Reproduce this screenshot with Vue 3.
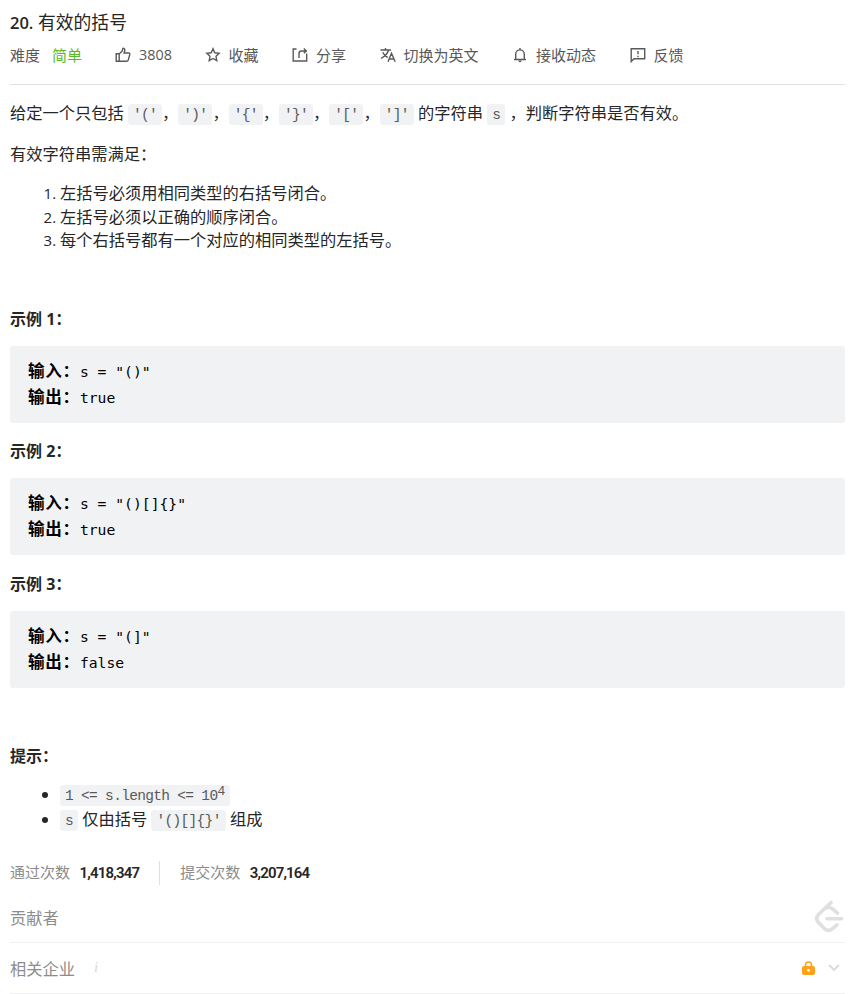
<script setup>
import {ref} from "vue";

const brackets = ref(["'('", "')'", "'{'", "'}'", "'['", "']'"])

const rules = ref([
  '左括号必须用相同类型的右括号闭合。',
  '左括号必须以正确的顺序闭合。',
  '每个右括号都有一个对应的相同类型的左括号。',
])

const examples = ref([
  {input: 's = "()"', output: 'true'},
  {input: 's = "()[]{}"', output: 'true'},
  {input: 's = "(]"', output: 'false'},
])
</script>

<template>
  <div class="question">
    <h4 class="title"><span class="title-no">20.</span> 有效的括号</h4>
    <div class="toolbar">
      <span class="label">难度</span>
      <span class="level">简单</span>
      <button class="tool like">
        <svg viewBox="0 0 16 16"><path d="M1.2 6.800h3v7.500h-3zM4.200 7l3-3.100.5-2.100c.2-.8 1.900-.6 2.100.7.1 1-.3 2.400-.7 3.500h4.500c1 0 1.400.7 1.200 1.500l-1.500 5.400c-.2.9-.8 1.400-1.700 1.400H4.200" /></svg>
        <span>3808</span>
      </button>
      <button class="tool star">
        <svg viewBox="0 0 16 16"><path d="M8 1.800l1.800 4 4.400.5-3.200 3 .8 4.400L8 11.500l-3.800 2.200.8-4.400-3.200-3 4.400-.5z" /></svg>
        <span>收藏</span>
      </button>
      <button class="tool share">
        <svg viewBox="0 0 16 16"><path d="M4.500 2H1.200v12h13.500V6.500M7 11V6.500q0-2.500 2.500-2.500h4.500M11.800 1.500L14.400 4l-2.600 2.300" /></svg>
        <span>分享</span>
      </button>
      <button class="tool lang">
        <svg viewBox="0 0 16 16"><path d="M.5 3h10.500M5.500 1v2M8.500 3C7.700 6.500 4.500 9.500 1 11.500M2.700 5.200c1 2.400 2.700 4.200 5 5.300M8 14.800l3.500-8.600 3.700 8.600M9.200 12h5" /></svg>
        <span>切换为英文</span>
      </button>
      <button class="tool bell">
        <svg viewBox="0 0 16 16"><path d="M2 12.500h12M3.700 12.300V7.200a4.300 4.300 0 0 1 8.600 0v5.100M8 1v2" /><path class="fill" d="M6.300 13.500h3.400a1.700 1.700 0 0 1-3.400 0z" /></svg>
        <span>接收动态</span>
      </button>
      <button class="tool feedback">
        <svg viewBox="0 0 16 16"><path d="M1.200 14.500V1.700h13.500v10H4zM8 4v3.300M8 8.700v1.500" /></svg>
        <span>反馈</span>
      </button>
    </div>

    <div class="content">
      <p>给定一个只包括 <template v-for="(item, i) in brackets" :key="item"><code>{{ item }}</code><template v-if="i < brackets.length - 1">，</template></template> 的字符串 <code>s</code> ，判断字符串是否有效。</p>
      <p class="need">有效字符串需满足：</p>
      <ol>
        <li v-for="rule in rules" :key="rule">{{ rule }}</li>
      </ol>

      <section v-for="(item, i) in examples" :key="i">
        <p class="strong">示例 {{ i + 1 }}：</p>
        <pre><strong>输入：</strong>{{ item.input }}
<strong>输出：</strong>{{ item.output }}</pre>
      </section>

      <p class="strong tip">提示：</p>
      <ul>
        <li><code>1 &lt;= s.length &lt;= 10<sup>4</sup></code></li>
        <li><code>s</code> 仅由括号 <code>'()[]{}'</code> 组成</li>
      </ul>
    </div>

    <div class="stats">
      <span>通过次数</span><b>1,418,347</b>
      <i class="divider"></i>
      <span>提交次数</span><b>3,207,164</b>
    </div>
    <div class="row contributor">
      <span>贡献者</span>
      <svg class="logo" viewBox="0 0 30 34"><path d="M17 2.500L4.500 14.500Q.8 18.500 4.500 22.500l6 6.200q4 3.500 8 0l4.500-3.900M11.500 8.500q3.500-2.500 6.500 0l5.500 4.700M13 18.800h14.500" /></svg>
    </div>
    <div class="row company">
      <span>相关企业</span>
      <i class="info">i</i>
      <svg class="lock" viewBox="0 0 13 14"><path class="shackle" d="M3.500 6V4a3 3 0 0 1 6 0v2" /><rect y="5" width="13" height="9" rx="2" /><circle cx="6.500" cy="9.300" r="1.400" /></svg>
      <svg class="arrow" viewBox="0 0 12 8"><path d="M1 1l5 5 5-5" /></svg>
    </div>
  </div>
</template>

<style>
body {
  margin: 0;
  background: #fff;
}
</style>

<style scoped>
.question {
  box-sizing: border-box;
  height: 994px;
  padding: 8px 16px 0 10px;
  overflow: hidden;
  color: #262626;
  font-family: "Open Sans", "Noto Sans CJK SC", sans-serif;
  font-size: 16px;
}

.title {
  height: 28px;
  margin: 0;
  line-height: 28px;
  font-size: 17.8px;
  font-weight: 400;
}

.title-no {
  font-weight: 600;
  font-size: 16.5px;
}

.toolbar {
  display: flex;
  align-items: center;
  height: 48px;
  border-bottom: 1px solid #e0e0e0;
  color: #595959;
  font-size: 15px;
  line-height: 22px;
  white-space: nowrap;
}

.toolbar > * {
  margin-bottom: 10px;
}

.label {
  width: 42px;
}

.level {
  width: 63px;
  color: #5ab726;
}

.tool {
  display: flex;
  align-items: center;
  flex: none;
  gap: 8px;
  margin-top: 0;
  margin-left: 0;
  margin-right: 0;
  padding: 0;
  border: none;
  background: none;
  color: inherit;
  font: inherit;
}

.tool svg {
  width: 16px;
  height: 16px;
  fill: none;
  stroke: #595959;
  stroke-width: 1.4;
}

.tool .fill {
  fill: #595959;
  stroke: none;
}

.like {
  width: 89.5px;
}

.like span {
  font-size: 14.4px;
}

.star {
  width: 87.5px;
}

.share {
  width: 87.5px;
}

.lang {
  width: 132.5px;
}

.bell {
  width: 117.5px;
}

.content {
  font-size: 16.25px;
  line-height: 24px;
}

.content p {
  height: 24px;
  margin: 16px 0 17px;
  white-space: nowrap;
}

.content .need {
  margin-bottom: 16px;
}

code {
  display: inline-block;
  height: 21px;
  margin: -2px 0;
  padding: 0 5px;
  border-radius: 3px;
  background: #f1f2f4;
  color: #595959;
  font-family: "Liberation Mono", monospace;
  font-size: 14.5px;
  letter-spacing: -0.68px;
  line-height: 23px;
  vertical-align: 0.5px;
}

ol, ul {
  margin: 0;
  padding-left: 50px;
}

ol {
  margin-bottom: 54px;
  line-height: 23.5px;
}

ol li::marker {
  font-size: 15px;
}

.content .strong {
  margin: 0 0 15px;
  font-weight: 700;
  font-size: 16px;
}

pre {
  box-sizing: border-box;
  height: 77px;
  margin: 0 0 16.8px;
  padding: 13px 18px 11px;
  border-radius: 3px;
  background: #f1f2f4;
  color: #000;
  font-family: "DejaVu Sans Mono", "Noto Sans CJK SC", monospace;
  font-size: 14.7px;
  line-height: 26px;
}

pre strong {
  font-family: "Noto Sans CJK SC", sans-serif;
  font-size: 16.6px;
  letter-spacing: 0.7px;
  line-height: 20px;
}

.content .tip {
  margin-top: 56px;
  margin-bottom: 14px;
}

ul {
  line-height: 25px;
}

ul li {
  height: 25px;
}

sup {
  font-size: 13px;
  line-height: 0;
  vertical-align: 5px;
}

.stats {
  display: flex;
  align-items: center;
  height: 24px;
  margin-top: 28.5px;
  color: #8c8c8c;
  font-size: 15px;
}

.stats span {
  margin-top: -2px;
}

.stats b {
  margin-left: 9.5px;
  color: #262626;
  font-family: Roboto, sans-serif;
  font-size: 15px;
  font-weight: 600;
  letter-spacing: -0.82px;
}

.divider {
  width: 1px;
  height: 24px;
  margin: 0 20px;
  background: #e0e0e0;
}

.row {
  display: flex;
  align-items: center;
  box-sizing: border-box;
  height: 51px;
  border-bottom: 1px solid #f0f0f0;
  color: #8c8c8c;
  font-size: 16.25px;
}

.contributor {
  height: 58px;
  padding-top: 8px;
}

.logo {
  width: 30px;
  height: 34px;
  margin-left: auto;
  margin-right: 1px;
  fill: none;
  stroke: #e0e0e0;
  stroke-width: 3.6;
  stroke-linecap: round;
}

.info {
  margin-left: 19px;
  color: #d9d9d9;
  font-family: "Liberation Serif", serif;
  font-size: 15px;
}

.lock {
  width: 13px;
  height: 14px;
  margin-left: auto;
  fill: #ffa119;
}

.lock .shackle {
  fill: none;
  stroke: #ffa119;
  stroke-width: 1.5;
}

.lock circle {
  fill: #fff;
}

.arrow {
  width: 12px;
  height: 8px;
  margin: 0 5px 0 13px;
  fill: none;
  stroke: #d9d9d9;
  stroke-width: 1.8;
}
</style>
